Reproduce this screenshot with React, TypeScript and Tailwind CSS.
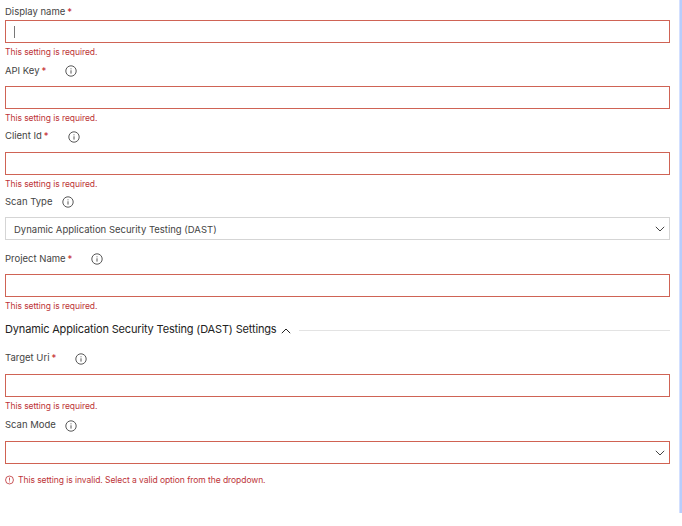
import React from "react";

function InfoIcon({ className }: { className: string }) {
  return (
    <svg viewBox="0 0 12 12" className={`h-3 w-3 shrink-0 ${className}`} fill="none" stroke="currentColor">
      <circle cx="6" cy="6" r="5.2" strokeWidth="0.9" />
      <path d="M6 5.3V8.6M6 3.4V4.3" strokeWidth="0.9" />
    </svg>
  );
}

function Chevron({ up = false, className = "" }: { up?: boolean; className?: string }) {
  return (
    <svg viewBox="0 0 10 6" className={`h-1.5 w-2.5 shrink-0 ${className}`} fill="none" stroke="currentColor">
      <path d={up ? "M0.8 5.2L5 1L9.2 5.2" : "M0.8 0.8L5 5L9.2 0.8"} strokeWidth="1" />
    </svg>
  );
}

function Label({ text, width, row, required = false, icon }: { text: string; width: string; row: string; required?: boolean; icon?: string }) {
  return (
    <div className={`flex items-start text-[9.5px] leading-[14px] text-[#444] ${row}`}>
      <span className={`shrink-0 whitespace-nowrap ${width}`}>
        {text}
        {required && <span className="ml-[2px] text-[#c4262e]">*</span>}
      </span>
      {icon && <InfoIcon className={icon} />}
    </div>
  );
}

function Field({ children, tone = "border-[#cf6355]" }: { children?: React.ReactNode; tone?: string }) {
  return (
    <div className={`flex h-[23px] items-center justify-between border bg-white pr-[4px] pl-2 text-[9.5px] text-[#444] ${tone}`}>
      {children}
    </div>
  );
}

function Required({ row = "h-[18px]" }: { row?: string }) {
  return <p className={`pt-[3px] text-[8.5px] leading-3 tracking-[-0.06px] text-[#bd3438] ${row}`}>This setting is required.</p>;
}

export default function App() {
  return (
    <div className="flex h-[526px] w-[682px] items-start overflow-hidden bg-white font-[Inter,sans-serif]">
      <main className="w-[679px] pr-[9px] pl-[5px]">
        <Label text="Display name" width="w-auto" row="h-5 pt-[5px]" required />
        <Field><span className="h-3 w-px bg-[#777]" /></Field>
        <Required />

        <Label text="API Key" width="w-[60px]" row="h-[25px] pt-[3px]" required icon="mt-[1px]" />
        <Field />
        <Required />

        <Label text="Client Id" width="w-[63px]" row="h-[25px] pt-[2px]" required icon="mt-[2px]" />
        <Field />
        <Required />

        <Label text="Scan Type" width="w-[57px]" row="h-6 pt-[2px]" icon="mt-[1px]" />
        <Field tone="border-[#d5d5d5]">
          <span className="pt-[3px]">Dynamic Application Security Testing (DAST)</span>
          <Chevron />
        </Field>

        <Label text="Project Name" width="w-[86px]" row="h-[34px] pt-3" required icon="mt-[1px]" />
        <Field />
        <Required row="h-[22px]" />

        <div className="flex h-[21px] items-center text-[#222]">
          <h2 className="-mt-[2px] w-[276px] shrink-0 text-[11px] leading-4 tracking-[-0.16px] whitespace-nowrap">Dynamic Application Security Testing (DAST) Settings</h2>
          <Chevron up className="mt-[2px]" />
          <div className="mt-[1px] ml-2 h-px flex-1 bg-[#e3e3e3]" />
        </div>

        <Label text="Target Uri" width="w-[70px]" row="h-[34px] pt-[11px]" required icon="mt-[2px]" />
        <Field />
        <Required />

        <Label text="Scan Mode" width="w-[60px]" row="h-[26px] pt-[3px]" icon="mt-[2px]" />
        <Field tone="border-[#d06252]"><span /><Chevron /></Field>
        <div className="mt-[10px] flex items-center text-[8.5px] leading-3 text-[#bd3438]">
          <svg viewBox="0 0 10 10" className="mr-1 h-2.5 w-[9px]" fill="none" stroke="currentColor" strokeWidth="0.9">
            <circle cx="5" cy="5" r="4.4" />
            <path d="M5 2.3V5.7M5 6.7V7.6" />
          </svg>
          <span className="tracking-[-0.06px]">This setting is invalid. Select a valid option from the dropdown.</span>
        </div>
      </main>
      <aside className="h-[513px] w-[3px] border-l border-[#d3e0ff] bg-[#b7cdfc]" />
    </div>
  );
}
